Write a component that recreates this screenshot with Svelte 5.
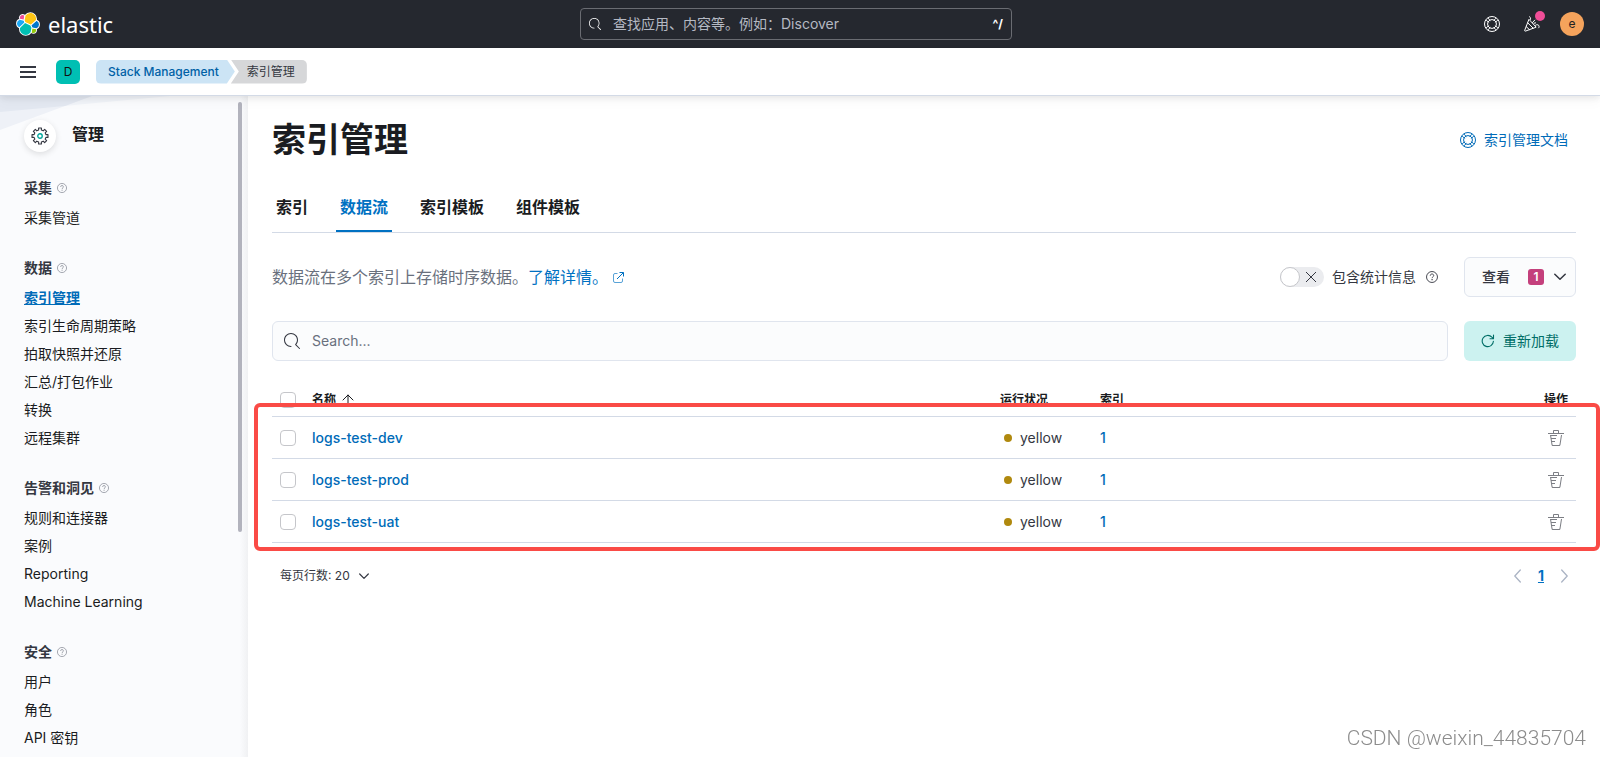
<script>
  const groups = [
    { title: '采集', items: ['采集管道'] },
    { title: '数据', items: ['索引管理', '索引生命周期策略', '拍取快照并还原', '汇总/打包作业', '转换', '远程集群'] },
    { title: '告警和洞见', items: ['规则和连接器', '案例', 'Reporting', 'Machine Learning'] },
    { title: '安全', items: ['用户', '角色', 'API 密钥'] },
  ];
  const current = '索引管理';
  const tabs = ['索引', '数据流', '索引模板', '组件模板'];
  const streams = [
    { name: 'logs-test-dev', health: 'yellow', indices: 1 },
    { name: 'logs-test-prod', health: 'yellow', indices: 1 },
    { name: 'logs-test-uat', health: 'yellow', indices: 1 },
  ];

  let activeTab = $state('数据流');
  let withStats = $state(false);

  // Outline of the cog: eight flat teeth round a ring.
  const cog = Array.from({ length: 8 }, (_, i) => {
    const at = (r, d) => {
      const a = ((i * 45 + d - 90) * Math.PI) / 180;
      return `${(8 + r * Math.cos(a)).toFixed(2)},${(8 + r * Math.sin(a)).toFixed(2)}`;
    };
    return [at(5.4, -13), at(7.2, -10), at(7.2, 10), at(5.4, 13)].join(' ');
  }).join(' ');
</script>

{#snippet magnifier(size)}
  <svg width={size} height={size} viewBox="0 0 16 16" aria-hidden="true">
    <path fill="currentColor" d="M11.271 11.978l3.872 3.873a.502.502 0 0 0 .708 0 .502.502 0 0 0 0-.708l-3.565-3.564c2.38-2.747 2.267-6.923-.342-9.532-2.73-2.73-7.17-2.73-9.898 0-2.728 2.729-2.728 7.17 0 9.9a6.955 6.955 0 0 0 4.949 2.05.5.5 0 0 0 0-1 5.96 5.96 0 0 1-4.242-1.757 6.01 6.01 0 0 1 0-8.486 6.004 6.004 0 0 1 8.484 0 6.01 6.01 0 0 1 0 8.486.5.5 0 0 0 .034.738z" />
  </svg>
{/snippet}

{#snippet buoy()}
  <svg width="16" height="16" viewBox="0 0 16 16" fill="none" stroke="currentColor" aria-hidden="true">
    <circle cx="8" cy="8" r="7.500" />
    <circle cx="8" cy="8" r="4.400" />
    <path d="M11.300 9.500 13.900 12.100M9.500 11.300 12.100 13.900M6.500 11.300 3.900 13.900M4.700 9.500 2.100 12.100M4.700 6.500 2.100 3.900M6.500 4.700 3.900 2.100M9.500 4.700 12.100 2.100M11.300 6.500 13.900 3.900" />
  </svg>
{/snippet}

{#snippet question(size)}
  <svg width={size} height={size} viewBox="0 0 16 16" fill="none" stroke="currentColor" stroke-width="1.2" aria-hidden="true">
    <circle cx="8" cy="8" r="7.3" />
    <path d="M5.7 6.3C5.7 4.8 6.7 4 8 4s2.3.8 2.3 2.1c0 1.6-2.2 1.7-2.2 3.5" />
    <path stroke-width="1.5" d="M8.1 10.8v1.5" />
  </svg>
{/snippet}

<div class="page">
  <header class="top">
    <a class="brand" href="#home">
      <svg width="24" height="24" viewBox="0 0 32 32" aria-hidden="true">
        <g stroke="#fff" stroke-width="2.4" stroke-linejoin="round" paint-order="stroke">
          <path fill="#f04e98" d="M5.288 9.067l4.8 1.137L11.14 4.7a3.785 3.785 0 0 0-2.294-.774 3.796 3.796 0 0 0-3.558 5.141" />
          <path fill="#1ba9f5" d="M4.871 10.213a5.434 5.434 0 0 0-3.561 5.116c0 2.292 1.413 4.332 3.546 5.128l6.757-6.122-1.24-2.663-5.502-1.459" />
          <path fill="#93c90e" d="M20.873 27.184a3.75 3.75 0 0 0 2.276.778 3.798 3.798 0 0 0 3.56-5.12l-4.79-1.125-1.046 5.467z" />
          <path fill="#0077cc" d="M21.848 20.549l5.28 1.239a5.43 5.43 0 0 0 3.561-5.116 5.434 5.434 0 0 0-3.538-5.11l-6.894 6.05 1.591 2.937z" />
          <path fill="#fec514" d="M12.58 13.787l7.002 3.211 7.066-6.213a7.849 7.849 0 0 0 .152-1.557c0-4.287-3.464-7.775-7.723-7.775a7.71 7.71 0 0 0-6.362 3.36l-1.176 6.124 1.041 2.85z" />
          <path fill="#00bfb3" d="M5.333 21.214a7.972 7.972 0 0 0-.146 1.585c0 4.3 3.488 7.787 7.787 7.787 2.59 0 5.002-1.282 6.46-3.427l1.167-6.117-1.557-2.995-7.03-3.218-6.681 6.385z" />
        </g>
      </svg>
      <span>elastic</span>
    </a>
    <label class="global-search">
      {@render magnifier(12)}
      <input type="text" aria-label="查找" placeholder="查找应用、内容等。例如：Discover" />
      <kbd>^/</kbd>
    </label>
    <div class="top-actions">
      <button aria-label="帮助">{@render buoy()}</button>
      <button class="news" aria-label="新闻">
        <svg width="16" height="16" viewBox="0 0 16 16" fill="none" stroke="currentColor" stroke-linecap="round" stroke-linejoin="round" aria-hidden="true">
          <path d="M4.800 3.700.700 14.300c-.200.600.200 1 .800.800l10.300-3.800z" />
          <path d="M3.700 6.800l5.400 5.300M2.200 10.600l3.200 3" />
          <path d="M5.600.700c1 .800 1.300 1.800.700 2.900M8.400 6.600l2.400-2.500M10 7.200l1.600-.300M11.500 9.200c1.700-1.300 3.700-.300 3.600 1.500 0 .500-.200.900-.500 1.200" />
        </svg>
        <i></i>
      </button>
      <button class="avatar" aria-label="用户菜单">e</button>
    </div>
  </header>

  <div class="sub">
    <button class="menu" aria-label="菜单"><i></i><i></i><i></i></button>
    <button class="space" aria-label="空间">D</button>
    <nav class="crumbs" aria-label="面包屑">
      <a class="crumb" href="#stack">Stack Management</a>
      <span class="crumb last">索引管理</span>
    </nav>
  </div>

  <div class="body">
    <aside>
      <svg class="rays" width="240" height="40" viewBox="0 0 240 40" aria-hidden="true">
        <path fill="#f1f4f9" d="M0 0H170L0 16z" />
        <path fill="#eef1f7" d="M0 0H92L0 34z" />
        <path fill="#e3e8f1" d="M0 0H92L65 10 0 16z" />
      </svg>
      <div class="side-title">
        <span class="cog">
          <svg width="18" height="18" viewBox="0 0 16 16" fill="none" aria-hidden="true">
            <polygon points={cog} stroke="#343741" stroke-linejoin="round" />
            <circle cx="8" cy="8" r="2" stroke="#00a69b" stroke-width="1.2" />
          </svg>
        </span>
        <h2>管理</h2>
      </div>
      {#each groups as g}
        <section>
          <h3>{g.title}<span>{@render question(10)}</span></h3>
          <ul>
            {#each g.items as item}
              <li><a href="#{item}" class:current={item === current}>{item}</a></li>
            {/each}
          </ul>
        </section>
      {/each}
      <div class="thumb"></div>
    </aside>

    <main>
      <div class="title-row">
        <h1>索引管理</h1>
        <a class="docs" href="#docs">{@render buoy()}<span>索引管理文档</span></a>
      </div>

      <div class="tabs" role="tablist">
        {#each tabs as t}
          <button role="tab" aria-selected={t === activeTab} class:active={t === activeTab} onclick={() => (activeTab = t)}>{t}</button>
        {/each}
      </div>

      <div class="row intro">
        <p>
          数据流在多个索引上存储时序数据。<a href="#more">了解详情。<svg width="11" height="11" viewBox="0 0 11 11" fill="none" stroke="currentColor" aria-hidden="true">
              <path opacity=".65" d="M4.5 1.5H2A1.5 1.5 0 0 0 .5 3v6A1.5 1.5 0 0 0 2 10.500h6A1.5 1.5 0 0 0 9.500 9V6.500" />
              <path d="M6.500.500h4v4M10.300.700 4 7" />
            </svg></a>
        </p>
        <div class="stats">
          <label>
            <input type="checkbox" role="switch" bind:checked={withStats} />
            <span>包含统计信息</span>
          </label>
          {@render question(12)}
        </div>
        <button class="box view">
          <span>查看</span>
          <b>1</b>
          <svg width="12" height="8" viewBox="0 0 12 8" fill="none" stroke="currentColor" stroke-width="1.5" stroke-linecap="round" stroke-linejoin="round" aria-hidden="true"><path d="M.8 1.2 6 6.3l5.2-5.1" /></svg>
        </button>
      </div>

      <div class="row filter">
        <label class="search">
          {@render magnifier(16)}
          <input type="text" aria-label="搜索" placeholder="Search..." />
        </label>
        <button class="box reload">
          <svg width="14" height="14" viewBox="0 0 14 14" fill="none" stroke="currentColor" stroke-width="1.1" stroke-linecap="round" stroke-linejoin="round" aria-hidden="true">
            <path d="M12.4 7.3A5.6 5.6 0 1 1 10.9 3.200L12.4 4.6M12.5 1v3.700H9" />
          </svg>
          <span>重新加载</span>
        </button>
      </div>

      <div class="table-wrap">
        <table>
          <colgroup>
            <col class="c-check" /><col /><col class="c-health" /><col class="c-count" /><col class="c-action" />
          </colgroup>
          <thead>
            <tr>
              <th><input type="checkbox" aria-label="全选" /></th>
              <th>
                <button class="sort">名称
                  <svg width="12" height="12" viewBox="0 0 12 12" fill="none" stroke="currentColor" stroke-linecap="round" aria-hidden="true"><path d="M6 11.500V1M1 6l5-5 5 5" /></svg>
                </button>
              </th>
              <th>运行状况</th>
              <th>索引</th>
              <th class="end">操作</th>
            </tr>
          </thead>
          <tbody>
            {#each streams as s}
              <tr>
                <td><input type="checkbox" aria-label={s.name} /></td>
                <td><a href="#{s.name}">{s.name}</a></td>
                <td><span class="health"><i></i>{s.health}</span></td>
                <td><a href="#indices">{s.indices}</a></td>
                <td>
                  <button class="trash" aria-label="删除">
                    <svg width="16" height="16" viewBox="0 0 16 16" aria-hidden="true">
                      <path fill="currentColor" d="M11 3h5v1H0V3h5V1a1 1 0 0 1 1-1h4a1 1 0 0 1 1 1v2Zm-7.056 8H7v1H4.1l.392 2.519c.042.269.254.458.493.458h6.03c.239 0 .451-.189.493-.458l1.498-9.576H14l-1.504 9.73c-.116.747-.74 1.304-1.481 1.304h-6.03c-.741 0-1.365-.557-1.481-1.304l-1.511-9.73H9V5.95H3.157L3.476 8H8v1H3.632l.312 2ZM6 3h4V1H6v2Z" />
                    </svg>
                  </button>
                </td>
              </tr>
            {/each}
          </tbody>
        </table>
        <div class="highlight"></div>
      </div>

      <div class="row foot">
        <button class="per-page">
          每页行数: 20
          <svg width="10" height="7" viewBox="0 0 10 7" fill="none" stroke="currentColor" stroke-width="1.2" stroke-linecap="round" stroke-linejoin="round" aria-hidden="true"><path d="M.7 1 5 5.300 9.300 1" /></svg>
        </button>
        <nav class="pages" aria-label="分页">
          <button aria-label="上一页"><svg width="7" height="14" viewBox="0 0 7 14" fill="none" stroke="currentColor" stroke-width="1.3" stroke-linecap="round" stroke-linejoin="round"><path d="M6.300 1 .8 7l5.500 6" /></svg></button>
          <a href="#page-1">1</a>
          <button aria-label="下一页"><svg width="7" height="14" viewBox="0 0 7 14" fill="none" stroke="currentColor" stroke-width="1.3" stroke-linecap="round" stroke-linejoin="round"><path d="M.7 1l5.500 6-5.500 6" /></svg></button>
        </nav>
      </div>
    </main>
  </div>
  <div class="watermark">CSDN @weixin_44835704</div>
</div>

<style>
  :global(body) {
    margin: 0;
  }
  .page {
    height: 100vh;
    display: flex;
    flex-direction: column;
    overflow: hidden;
    background: #fff;
    color: #343741;
    font: 14px/20px Inter, "Noto Sans CJK SC", sans-serif;
  }
  h1,
  h2,
  h3,
  p,
  ul {
    margin: 0;
    padding: 0;
    list-style: none;
  }
  svg {
    display: block;
    flex: none;
  }
  button {
    margin: 0;
    padding: 0;
    border: 0;
    background: none;
    color: inherit;
    font: inherit;
    cursor: pointer;
  }
  a {
    color: #006bb8;
    text-decoration: none;
  }
  input[type="text"] {
    flex: 1;
    min-width: 0;
    padding: 0;
    border: 0;
    outline: 0;
    background: none;
    color: inherit;
    font: inherit;
  }

  .top {
    flex: none;
    display: grid;
    grid-template-columns: 1fr 432px 1fr;
    align-items: center;
    height: 48px;
    padding: 0 24px 0 16px;
    background: #25282f;
    color: #fff;
  }
  .brand {
    display: flex;
    align-items: center;
    gap: 8px;
    color: #fff;
    font: 22px/24px "Noto Sans", sans-serif;
  }
  .global-search {
    display: flex;
    align-items: center;
    gap: 12px;
    box-sizing: border-box;
    height: 32px;
    padding: 0 8px;
    border: 1px solid #6a6c72;
    border-radius: 4px;
  }
  .global-search input::placeholder {
    color: #b5b9c3;
    opacity: 1;
  }
  kbd {
    font: bold 12px/16px Inter, sans-serif;
  }
  .top-actions {
    display: flex;
    justify-content: flex-end;
    align-items: center;
    gap: 24px;
    margin-right: -8px;
  }
  .news {
    position: relative;
  }
  .news i {
    position: absolute;
    top: -5px;
    right: -5px;
    width: 10px;
    height: 10px;
    border-radius: 50%;
    background: #f04e98;
  }
  .avatar {
    width: 24px;
    height: 24px;
    margin-left: -4px;
    border-radius: 50%;
    background: #f5a35c;
    color: #222;
    font-size: 12px;
  }

  .sub {
    position: relative;
    z-index: 2;
    flex: none;
    display: flex;
    align-items: center;
    height: 47px;
    padding: 0 20px;
    border-bottom: 1px solid #d3dae6;
    box-shadow: 0 2px 6px rgba(0, 0, 0, 0.08), 0 6px 12px rgba(0, 0, 0, 0.03);
    background: #fff;
  }
  .menu {
    display: grid;
    gap: 3px;
    width: 16px;
  }
  .menu i {
    height: 2px;
    background: #343741;
  }
  .space {
    width: 24px;
    height: 24px;
    margin: 0 16px 0 20px;
    border-radius: 5px;
    background: #00bfb3;
    color: #111;
    font-size: 12px;
  }
  .crumbs {
    display: flex;
    font-size: 12px;
    font-weight: 500;
    line-height: 24px;
  }
  .crumb {
    padding: 0 16px 0 12px;
    border-radius: 5px 0 0 5px;
    background: #cce4f5;
    color: #0061a6;
    clip-path: polygon(0 0, calc(100% - 8px) 0, 100% 50%, calc(100% - 8px) 100%, 0 100%);
  }
  .last {
    margin-left: -4px;
    padding: 0 12px 0 16px;
    border-radius: 0 5px 5px 0;
    background: #d6d7d9;
    color: #343741;
    font-weight: 400;
    clip-path: polygon(0 0, 100% 0, 100% 100%, 0 100%, 8px 50%);
  }

  .body {
    flex: 1;
    min-height: 0;
    display: grid;
    grid-template-columns: 248px 1fr;
  }
  aside {
    position: relative;
    box-sizing: border-box;
    min-height: 0;
    overflow: hidden;
    padding: 24px;
    background: linear-gradient(to right, transparent calc(100% - 8px), #f0f1f3) #fafbfd;
  }
  .rays {
    position: absolute;
    top: 0;
    left: 0;
  }
  .side-title {
    position: relative;
    display: flex;
    gap: 16px;
    margin-bottom: 26px;
  }
  .cog {
    display: grid;
    place-items: center;
    width: 32px;
    height: 32px;
    border-radius: 50%;
    background: #fff;
    box-shadow: 0 2px 6px rgba(0, 0, 0, 0.12);
  }
  h2 {
    color: #1a1c21;
    font-size: 16px;
    line-height: 28px;
    font-weight: 600;
  }
  section {
    margin-bottom: 30px;
  }
  h3 {
    display: flex;
    align-items: center;
    gap: 5px;
    margin-bottom: 10px;
    font-size: 14px;
    line-height: 20px;
    font-weight: 600;
  }
  h3 span {
    color: #8a8e98;
  }
  ul {
    display: grid;
    gap: 8px;
  }
  li a {
    display: block;
    color: #1a1c21;
    line-height: 20px;
  }
  li .current {
    color: #006bb8;
    font-weight: 600;
    text-decoration: underline;
  }
  .thumb {
    position: absolute;
    top: 6px;
    right: 6px;
    width: 4px;
    height: 65%;
    border-radius: 2px;
    background: #b2b3bd;
  }

  main {
    min-width: 0;
    padding: 24px;
  }
  .row,
  .title-row {
    display: flex;
    align-items: center;
  }
  .title-row {
    justify-content: space-between;
    padding-right: 8px;
  }
  h1 {
    color: #1a1c21;
    font-size: 34px;
    line-height: 40px;
    font-weight: 700;
  }
  .docs {
    display: flex;
    align-items: center;
    gap: 8px;
  }
  .tabs {
    display: flex;
    gap: 24px;
    margin-top: 24px;
    border-bottom: 1px solid #d3dae6;
  }
  .tabs button {
    height: 48px;
    padding: 0 4px;
    border-bottom: 2px solid transparent;
    color: #1a1c21;
    font-size: 16px;
    font-weight: 600;
  }
  .tabs .active {
    border-color: #0071c2;
    color: #0071c2;
  }
  .intro {
    margin-top: 24px;
  }
  .intro p {
    flex: 1;
    color: #69707d;
    font-size: 16px;
    line-height: 24px;
  }
  .intro p a {
    color: #0071c2;
  }
  .intro p svg {
    display: inline-block;
    margin-left: 5px;
  }
  .stats {
    display: flex;
    align-items: center;
    gap: 10px;
    margin-right: 26px;
  }
  .stats label {
    display: flex;
    align-items: center;
    gap: 8px;
  }
  .stats input {
    appearance: none;
    position: relative;
    width: 44px;
    height: 20px;
    margin: 0;
    border-radius: 10px;
    background: #ebecef;
  }
  .stats input::before {
    content: "";
    position: absolute;
    box-sizing: border-box;
    width: 20px;
    height: 20px;
    border: 1px solid #c5c6ca;
    border-radius: 50%;
    background: #fff;
  }
  .stats input::after {
    content: "";
    position: absolute;
    top: 5px;
    right: 8px;
    width: 10px;
    height: 10px;
    background:
      linear-gradient(45deg, transparent 46%, #343741 46%, #343741 54%, transparent 54%),
      linear-gradient(-45deg, transparent 46%, #343741 46%, #343741 54%, transparent 54%);
  }
  .stats input:checked::before {
    right: 0;
  }
  .stats input:checked::after {
    content: none;
  }
  .box {
    box-sizing: border-box;
    display: flex;
    align-items: center;
    width: 112px;
    height: 40px;
    border-radius: 6px;
  }
  .view {
    justify-content: space-between;
    padding: 0 9px 0 17px;
    border: 1px solid #e0e5ee;
    background: #fbfcfd;
    font-weight: 500;
  }
  .view b {
    width: 16px;
    margin-left: 8px;
    border-radius: 3px;
    background: #c4407c;
    color: #fff;
    font-size: 12px;
    line-height: 16px;
    font-weight: 600;
  }
  .filter {
    gap: 16px;
    margin-top: 24px;
  }
  .search {
    flex: 1;
    display: flex;
    align-items: center;
    gap: 12px;
    box-sizing: border-box;
    height: 40px;
    padding: 0 11px;
    border: 1px solid #e0e5ee;
    border-radius: 6px;
    background: #fbfcfd;
  }
  .search input::placeholder {
    color: #69707d;
    opacity: 1;
  }
  .reload {
    justify-content: center;
    gap: 8px;
    background: #ccf2f0;
    color: #006e67;
  }

  .table-wrap {
    position: relative;
    margin-top: 24px;
  }
  .highlight {
    position: absolute;
    top: 18px;
    right: -24px;
    bottom: -8px;
    left: -18px;
    border: 4px solid #fa4b46;
    border-radius: 6px;
    pointer-events: none;
  }
  table {
    width: 100%;
    table-layout: fixed;
    border-collapse: separate;
    border-spacing: 0;
  }
  .c-check {
    width: 32px;
  }
  .c-health,
  .c-count {
    width: 100px;
  }
  .c-action {
    width: 384px;
  }
  th,
  td {
    box-sizing: border-box;
    padding: 0 8px;
    border-bottom: 1px solid #d3dae6;
    text-align: left;
  }
  th {
    height: 32px;
    padding-bottom: 2px;
    color: #1a1c21;
    font-size: 12px;
    line-height: 16px;
    font-weight: 600;
  }
  td {
    height: 42px;
  }
  td a {
    font-weight: 500;
  }
  .end {
    text-align: right;
  }
  .sort {
    display: flex;
    align-items: center;
    gap: 6px;
  }
  table input {
    appearance: none;
    box-sizing: border-box;
    display: block;
    width: 16px;
    height: 16px;
    margin: 0;
    border: 1px solid #c5c6ca;
    border-radius: 4px;
    background: #fff;
  }
  .health {
    display: flex;
    align-items: center;
    gap: 8px;
    padding-left: 4px;
  }
  .health i {
    width: 8px;
    height: 8px;
    border-radius: 50%;
    background: #b0890e;
  }
  .trash {
    display: block;
    margin: 0 4px 0 auto;
    color: #7c7e84;
  }

  .foot {
    justify-content: space-between;
    margin-top: 21px;
    padding: 0 8px;
  }
  .per-page {
    display: flex;
    align-items: center;
    gap: 9px;
    height: 24px;
    font-size: 12px;
  }
  .pages {
    display: flex;
    align-items: center;
    gap: 17px;
    color: #abb4c4;
  }
  .pages a {
    color: #0071c2;
    font-weight: 700;
    text-decoration: underline;
  }
  .watermark {
    position: fixed;
    right: 14px;
    bottom: 6px;
    color: #8c8c8c;
    font: 300 21px/26px Roboto, sans-serif;
  }
</style>
